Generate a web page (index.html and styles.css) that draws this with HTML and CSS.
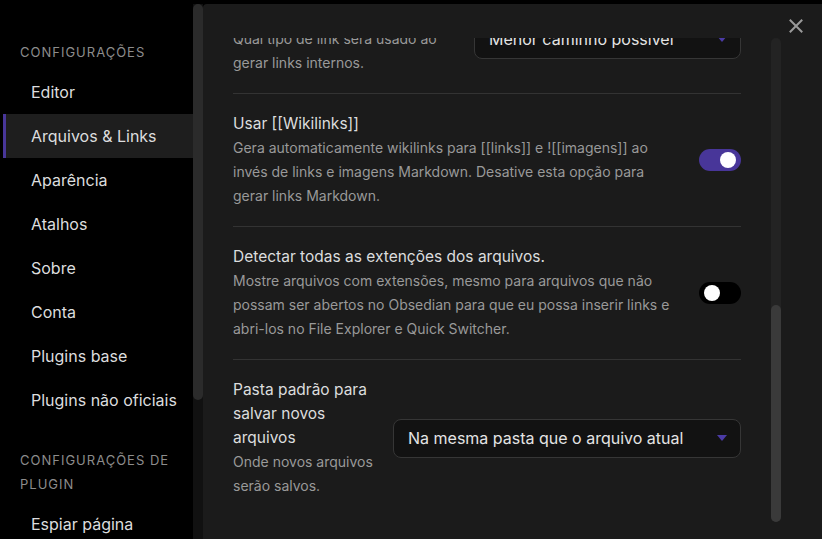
FILE: index.html
```html
<!DOCTYPE html>
<html lang="pt-BR">
<head>
<meta charset="utf-8">
<title>Configurações</title>
<link rel="stylesheet" href="styles.css">
</head>
<body>
<div class="app">
  <nav class="sidebar">
    <div class="nav-heading">CONFIGURAÇÕES</div>
    <div class="nav-item">Editor</div>
    <div class="nav-item active">Arquivos &amp; Links</div>
    <div class="nav-item">Aparência</div>
    <div class="nav-item">Atalhos</div>
    <div class="nav-item">Sobre</div>
    <div class="nav-item">Conta</div>
    <div class="nav-item">Plugins base</div>
    <div class="nav-item">Plugins não oficiais</div>
    <div class="nav-heading">CONFIGURAÇÕES DE<br>PLUGIN</div>
    <div class="nav-item">Espiar página</div>
  </nav>
  <div class="side-scroll"><div class="side-thumb"></div></div>
  <main class="panel">
    <button class="close" aria-label="Fechar">
      <svg width="14" height="14" viewBox="0 0 14 14"><path d="M1.5 1.5 L12.5 12.5 M12.5 1.5 L1.5 12.5" stroke="#9a9a9a" stroke-width="2" stroke-linecap="square"/></svg>
    </button>
    <div class="scroll-area">
      <div class="settings">
        <div class="setting">
          <div class="info">
            <div class="name">Formato de novo link</div>
            <div class="desc">Qual tipo de link será usado ao gerar links internos.</div>
          </div>
          <div class="dropdown dd-small">
            <span>Menor caminho possível</span>
            <svg class="arrow" width="10" height="6" viewBox="0 0 10 6"><path d="M0 0 H10 L5 6 Z" fill="#4b3ba6"/></svg>
          </div>
        </div>
        <div class="setting">
          <div class="info">
            <div class="name">Usar [[Wikilinks]]</div>
            <div class="desc">Gera automaticamente wikilinks para [[links]] e ![[imagens]] ao invés de links e imagens Markdown. Desative esta opção para gerar links Markdown.</div>
          </div>
          <div class="toggle on"><div class="knob"></div></div>
        </div>
        <div class="setting">
          <div class="info">
            <div class="name">Detectar todas as extenções dos arquivos.</div>
            <div class="desc">Mostre arquivos com extensões, mesmo para arquivos que não possam ser abertos no Obsedian para que eu possa inserir links e abri-los no File Explorer e Quick Switcher.</div>
          </div>
          <div class="toggle"><div class="knob"></div></div>
        </div>
        <div class="setting">
          <div class="info">
            <div class="name">Pasta padrão para salvar novos arquivos</div>
            <div class="desc">Onde novos arquivos serão salvos.</div>
          </div>
          <div class="dropdown dd-large">
            <span>Na mesma pasta que o arquivo atual</span>
            <svg class="arrow" width="10" height="6" viewBox="0 0 10 6"><path d="M0 0 H10 L5 6 Z" fill="#4b3ba6"/></svg>
          </div>
        </div>
      </div>
    </div>
    <div class="scrollbar"><div class="thumb"></div></div>
  </main>
</div>
</body>
</html>
```
FILE: styles.css
```css
* { box-sizing: border-box; }
html, body {
  margin: 0;
  padding: 0;
  background: #000;
  width: 822px;
  height: 539px;
  overflow: hidden;
  font-family: Inter, "Noto Sans", sans-serif;
  color: #dcddde;
}
.app {
  display: flex;
  height: 539px;
}
.sidebar {
  width: 193px;
  flex: none;
  height: 539px;
  overflow: hidden;
  background: #000;
  padding: 14px 0 0 3px;
}
.nav-heading {
  padding: 26px 0 0 17px;
  margin-bottom: 6px;
  font-size: 13px;
  line-height: 24px;
  letter-spacing: 1px;
  color: #8c8c8c;
}
.nav-item {
  height: 44px;
  display: flex;
  align-items: center;
  padding-left: 25px;
  border-left: 3px solid transparent;
  font-size: 16px;
  color: #dcddde;
}
.nav-item.active {
  background: #1e1e1e;
  border-left-color: #483699;
}
.side-scroll {
  width: 10px;
  flex: none;
  margin-top: 4px;
  background: #111;
}
.side-thumb {
  height: 396px;
  background: #2b2b2b;
  border-radius: 5px;
}
.panel {
  flex: 1;
  margin-top: 4px;
  background: #1b1b1b;
  border-top-left-radius: 4px;
  display: flex;
  position: relative;
}
.close {
  position: absolute;
  top: 15px;
  right: 19px;
  width: 14px;
  height: 14px;
  padding: 0;
  border: 0;
  background: none;
  display: flex;
}
.scroll-area {
  width: 538px;
  flex: none;
  margin-top: 34px;
  padding-left: 30px;
  overflow: hidden;
}
.settings {
  margin-top: -53px;
}
.setting {
  display: flex;
  align-items: center;
  padding: 18px 0;
  border-top: 1px solid #333;
}
.setting:first-child {
  border-top: 0;
}
.info {
  flex: 1;
  min-width: 0;
  margin-right: 16px;
}
.name {
  font-size: 15.5px;
  line-height: 24px;
  color: #dcddde;
}
.desc {
  font-size: 14px;
  line-height: 24px;
  color: #999;
}
.toggle {
  width: 42px;
  height: 22px;
  flex: none;
  border-radius: 11px;
  background: #000;
  display: flex;
  align-items: center;
  padding: 0 5px;
}
.toggle.on {
  background: #483699;
  justify-content: flex-end;
}
.knob {
  width: 16px;
  height: 16px;
  border-radius: 50%;
  background: #fff;
}
.dropdown {
  flex: none;
  height: 39px;
  border: 1px solid #363636;
  border-radius: 8px;
  background: #121212;
  display: flex;
  align-items: center;
  justify-content: space-between;
  padding: 0 13px 0 14px;
  font-size: 16px;
  color: #e4e4e4;
}
.dd-small { width: 267px; }
.dd-large { width: 348px; }
.scrollbar {
  width: 10px;
  flex: none;
  margin: 34px 0 0 30px;
  height: 484px;
  background: #232323;
  border-radius: 5px;
  display: flex;
  flex-direction: column;
  justify-content: flex-end;
}
.thumb {
  height: 217px;
  background: #3a3a3a;
  border-radius: 5px;
}
```
